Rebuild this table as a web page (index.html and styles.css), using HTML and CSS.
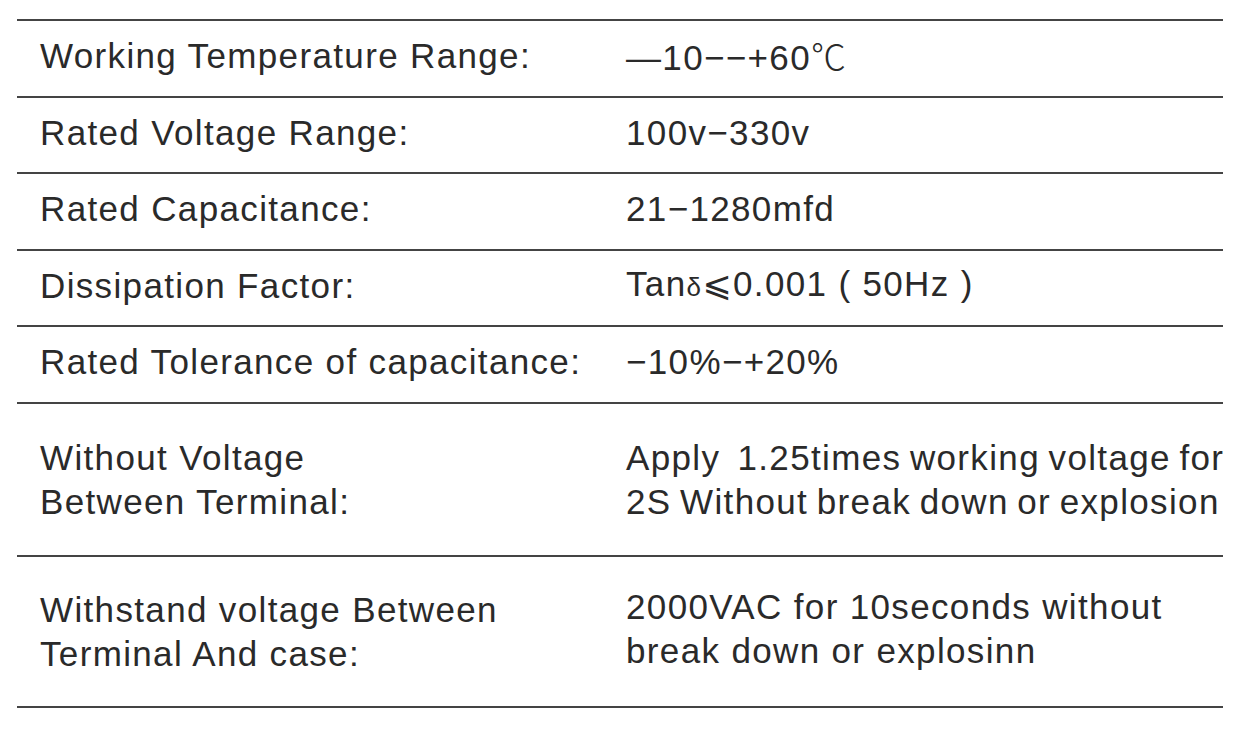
FILE: index.html
```html
<!DOCTYPE html>
<html lang="en">
<head>
<meta charset="utf-8">
<title>Specifications</title>
<link rel="stylesheet" href="styles.css">
</head>
<body>
<div class="spec">
  <div class="row tall-a">
    <div class="label">Working Temperature Range:</div>
    <div class="value">—10−−+60<span class="deg">℃</span></div>
  </div>
  <div class="row tall-b">
    <div class="label">Rated Voltage Range:</div>
    <div class="value">100v−330v</div>
  </div>
  <div class="row tall-a">
    <div class="label">Rated Capacitance:</div>
    <div class="value">21−1280mfd</div>
  </div>
  <div class="row tall-b">
    <div class="label">Dissipation Factor:</div>
    <div class="value">Tan<span class="delta">δ</span>⩽0.001 ( 50Hz )</div>
  </div>
  <div class="row tall-a">
    <div class="label">Rated Tolerance of capacitance:</div>
    <div class="value">−10%−+20%</div>
  </div>
  <div class="row double">
    <div class="label">Without Voltage<br>Between Terminal:</div>
    <div class="value tight">Apply&nbsp; 1.25times working voltage for<br>2S Without break down or explosion</div>
  </div>
  <div class="row double last">
    <div class="label">Withstand voltage Between<br>Terminal And case:</div>
    <div class="value raised">2000VAC for 10seconds without<br>break down or explosinn</div>
  </div>
</div>
</body>
</html>
```
FILE: styles.css
```css
html, body {
  margin: 0;
  padding: 0;
  background: #ffffff;
}

body {
  font-family: "Liberation Sans", Arial, "DejaVu Sans", sans-serif;
  color: #2a2a2a;
}

.spec {
  margin: 19px 0 0 17px;
  width: 1206px;
  border-bottom: 2px solid #444444;
}

.row {
  box-sizing: border-box;
  display: grid;
  grid-template-columns: 609px 1fr;
  align-items: center;
  border-top: 2px solid #444444;
  padding-bottom: 5px;
  font-size: 35px;
  line-height: 44px;
  letter-spacing: 1.35px;
  white-space: nowrap;
}

.tall-a { height: 77px; }
.tall-b { height: 76px; }
.double { height: 153px; padding-bottom: 0; }
.last { height: 151px; }

.label {
  padding-left: 23px;
}

.value {
  padding-left: 0;
}

.tight {
  word-spacing: -2.5px;
}

.raised {
  padding-bottom: 6px;
}

.delta {
  font-size: 26px;
}

.deg {
  font-family: "Noto Sans CJK SC", "DejaVu Sans", sans-serif;
  font-weight: 300;
  letter-spacing: 0;
}
```
